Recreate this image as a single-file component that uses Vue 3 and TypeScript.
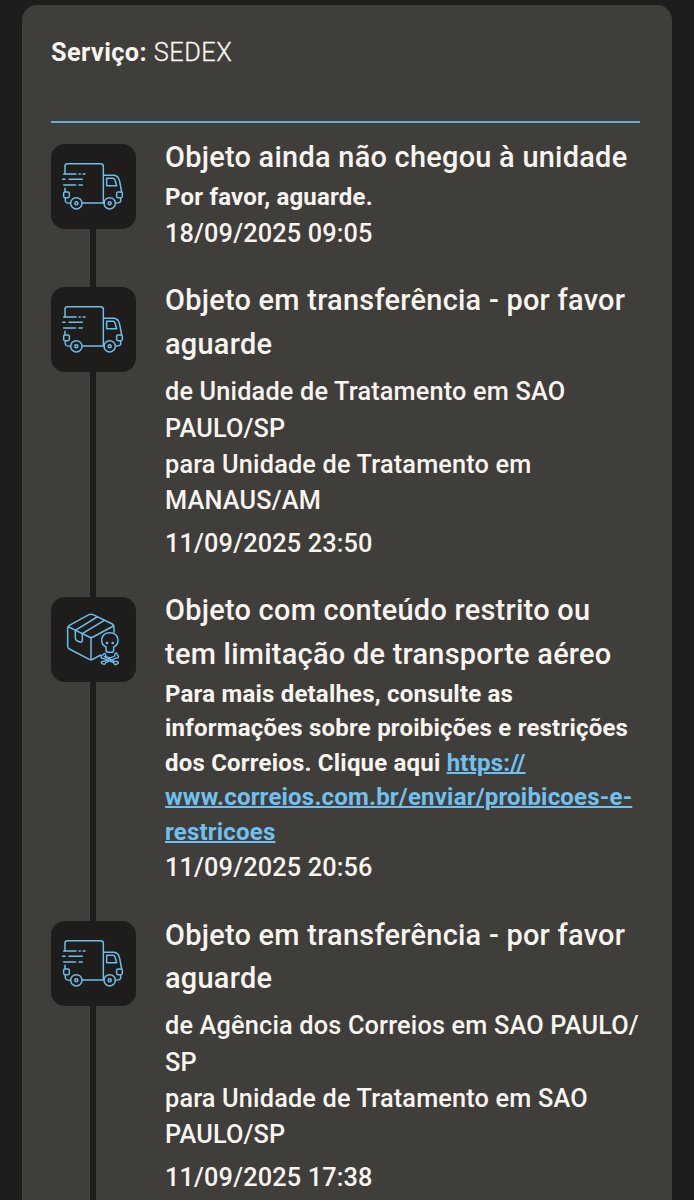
<script setup lang="ts">
interface TrackingEvent {
  icon: 'truck' | 'restricted'
  title: string[]
  detail?: string[]
  link?: string[]
  route?: string[]
  date: string
}

const events: TrackingEvent[] = [
  {
    icon: 'truck',
    title: ['Objeto ainda não chegou à unidade'],
    detail: ['Por favor, aguarde.'],
    date: '18/09/2025 09:05',
  },
  {
    icon: 'truck',
    title: ['Objeto em transferência - por favor', 'aguarde'],
    route: ['de Unidade de Tratamento em SAO', 'PAULO/SP', 'para Unidade de Tratamento em', 'MANAUS/AM'],
    date: '11/09/2025 23:50',
  },
  {
    icon: 'restricted',
    title: ['Objeto com conteúdo restrito ou', 'tem limitação de transporte aéreo'],
    detail: ['Para mais detalhes, consulte as', 'informações sobre proibições e restrições', 'dos Correios. Clique aqui '],
    link: ['https://', 'www.correios.com.br/enviar/proibicoes-e-', 'restricoes'],
    date: '11/09/2025 20:56',
  },
  {
    icon: 'truck',
    title: ['Objeto em transferência - por favor', 'aguarde'],
    route: ['de Agência dos Correios em SAO PAULO/', 'SP', 'para Unidade de Tratamento em SAO', 'PAULO/SP'],
    date: '11/09/2025 17:38',
  },
]
</script>

<template>
  <main class="page">
    <section class="card">
      <p class="service"><strong>Serviço:</strong> <span>SEDEX</span></p>
      <ol class="timeline">
        <li v-for="(event, i) in events" :key="i" class="event">
          <div class="rail">
            <div class="tile">
              <svg v-if="event.icon === 'truck'" viewBox="33 26 255 255">
                <path d="M75 115V92Q75 85 82 85H182Q190 85 190 93V203H127M75 159V169M76 187V197Q77 204 91 204M190 120H222Q235 121 239 138L245 170M242 187V197Q242 203 228 203M190 203H193" />
                <path d="M200 129H219Q223 129 225 134L230 151H200Z" />
                <path d="M71 116H108M117 116H121M129 116H135M68 132H75M87 132H127M71 149H107M117 149H127" />
                <rect x="71" y="170" width="17" height="17" rx="4" />
                <rect x="230" y="170" width="17" height="17" rx="4" />
                <circle cx="109" cy="204" r="17" /><circle cx="109" cy="204" r="4.5" />
                <circle cx="209" cy="204" r="17" /><circle cx="209" cy="204" r="4.5" />
              </svg>
              <svg v-else viewBox="33 22 255 255">
                <path d="M182 196L158 209Q153 212 148 209L88 178Q83 175 83 169V116Q83 110 88 107L147 75Q153 72 159 75L217 103Q222 106 222 112V128M84 111L148 142Q153 145 159 142L220 109M153 145V210" />
                <path d="M106 122L171 82M127 132L193 92M106 122V145Q106 151 112 154L120 157Q127 159 127 151V132" />
                <path d="M198 172C177 162 182 129 209 129C237 129 242 162 221 172V181Q221 188 214 188H205Q198 188 198 181Z" />
                <circle class="eye" cx="201" cy="160" r="4" /><circle class="eye" cx="218" cy="160" r="4" />
                <path class="bone" d="M193 201L225 216Q233 214 235 218Q236 223 230 223Q227 227 223 223L221 219L190 206Q184 207 183 202Q183 197 188 197Q192 188 197 194V201L210 205L224 199Q223 192 227 190Q232 190 232 196Q237 198 235 203Q233 206 228 205L197 219Q195 226 190 223Q184 223 184 218Q186 213 192 215L207 209" />
              </svg>
            </div>
          </div>
          <div class="content">
            <h2><template v-for="(line, n) in event.title" :key="n"><br v-if="n" />{{ line }}</template></h2>
            <p v-if="event.detail" class="detail"><template v-for="(line, n) in event.detail" :key="n"><br v-if="n" />{{ line }}</template><a v-if="event.link"><template v-for="(part, n) in event.link" :key="n"><br v-if="n" />{{ part }}</template></a></p>
            <p v-if="event.route" class="route"><template v-for="(line, n) in event.route" :key="n"><br v-if="n" />{{ line }}</template></p>
            <time>{{ event.date }}</time>
          </div>
        </li>
      </ol>
    </section>
  </main>
</template>

<style>
html, body { margin: 0; background: #1e1d1b; }
</style>

<style scoped>
.page {
  box-sizing: border-box;
  height: 1200px;
  overflow: hidden;
  padding: 4.5px 22px 0;
  background: #1e1d1b;
  color: #f8f5f0;
  font-family: Roboto, "Liberation Sans", sans-serif;
}
.card {
  box-sizing: border-box;
  min-height: 1300px;
  padding: 30px 32px 0 29px;
  border-radius: 15px;
  background: #403e3a;
}
.service {
  margin: 0;
  height: 86.5px;
  border-bottom: 2px solid #68add0;
  font-size: 25.3px;
  line-height: 36px;
  letter-spacing: 0.4px;
}
.service strong { font-weight: 700; }
.service span { font-weight: 300; letter-spacing: 0.55px; -webkit-text-stroke: 0.3px currentColor; }
.timeline { list-style: none; margin: 0; padding: 13.2px 0 0; }
.event { display: flex; align-items: stretch; gap: 29px; }
.rail {
  flex: 0 0 85px;
  padding-top: 7.5px;
  background: linear-gradient(#1e1d1b, #1e1d1b) 39px 0 / 6px 100% no-repeat;
}
.event:first-child .rail { background-position: 39px 20px; }
.tile { width: 85px; height: 85px; border-radius: 14px; background: #1e1d1b; }
.tile svg { display: block; width: 85px; height: 85px; }
.tile svg * { fill: none; stroke: #6dbde9; stroke-width: 4.5; stroke-linecap: round; stroke-linejoin: round; }
.tile svg .eye { fill: #6dbde9; stroke: none; }
.tile svg .bone { stroke-width: 4; }
.content { flex: 1; min-width: 0; padding-bottom: 27.3px; white-space: nowrap; }
h2 { margin: 0; font-size: 28.9px; font-weight: 500; line-height: 43.4px; letter-spacing: 0.27px; }
.detail { margin: 0.8px 0 1.2px; white-space: pre; font-size: 24px; font-weight: 700; line-height: 34.4px; letter-spacing: 0.2px; }
.detail a { color: #70c0f0; text-decoration: underline; text-decoration-thickness: 2px; }
.route { margin: 8px 0 6.7px; font-size: 25.3px; font-weight: 500; line-height: 36.2px; letter-spacing: 0.17px; }
time { display: block; font-size: 25.3px; font-weight: 500; line-height: 36.2px; letter-spacing: 0.15px; }
</style>
